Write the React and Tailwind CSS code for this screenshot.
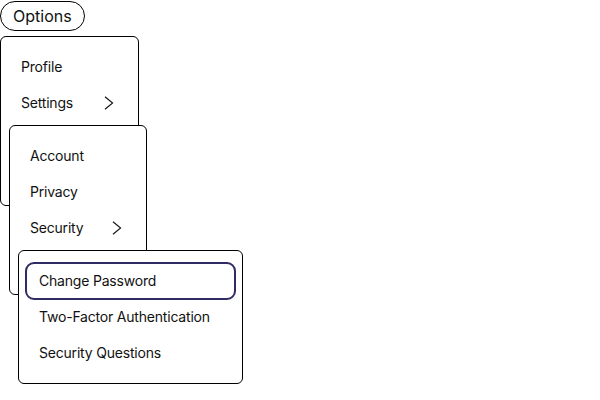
import { useState } from "react";

function Chevron() {
  return (
    <svg width="10" height="14" viewBox="0 0 10 14" fill="none" className="shrink-0">
      <path d="M1 0.8 L8.6 7 L1 13.2" stroke="#111" strokeWidth="1.1" strokeLinejoin="miter" />
    </svg>
  );
}

function Item({ label, sub, active }) {
  return (
    <div
      className={
        "h-9 flex items-center justify-between pl-[13px] pr-[17px] rounded-lg text-sm tracking-[-0.2px] text-[#111] " +
        (active ? "outline-2 outline-[#2f2b63] -outline-offset-1" : "")
      }
    >
      <span>{label}</span>
      {sub && <Chevron />}
    </div>
  );
}

function Menu({ className, children }) {
  return (
    <div className={"absolute bg-white border border-black rounded-md pt-3 pb-3 px-[7px] " + className}>
      {children}
    </div>
  );
}

export default function App() {
  const [open] = useState(true);

  return (
    <div className="relative w-[600px] h-[400px] bg-white font-['Inter','Liberation_Sans',sans-serif]">
      <button className="mt-px h-[30px] px-3 border border-black rounded-full text-base text-[#111] leading-none">
        Options
      </button>

      {open && (
        <>
          <Menu className="left-0 top-9 w-[139px]">
            <Item label="Profile" />
            <Item label="Settings" sub />
            <Item label="Help" />
            <Item label="Sign out" />
          </Menu>
          <Menu className="left-[9px] top-[125px] w-[138px]">
            <Item label="Account" />
            <Item label="Privacy" />
            <Item label="Security" sub />
            <Item label="Notifications" />
          </Menu>
          <Menu className="left-[18px] top-[250px] w-[225px]">
            <Item label="Change Password" active />
            <Item label="Two-Factor Authentication" />
            <Item label="Security Questions" />
          </Menu>
        </>
      )}
    </div>
  );
}
